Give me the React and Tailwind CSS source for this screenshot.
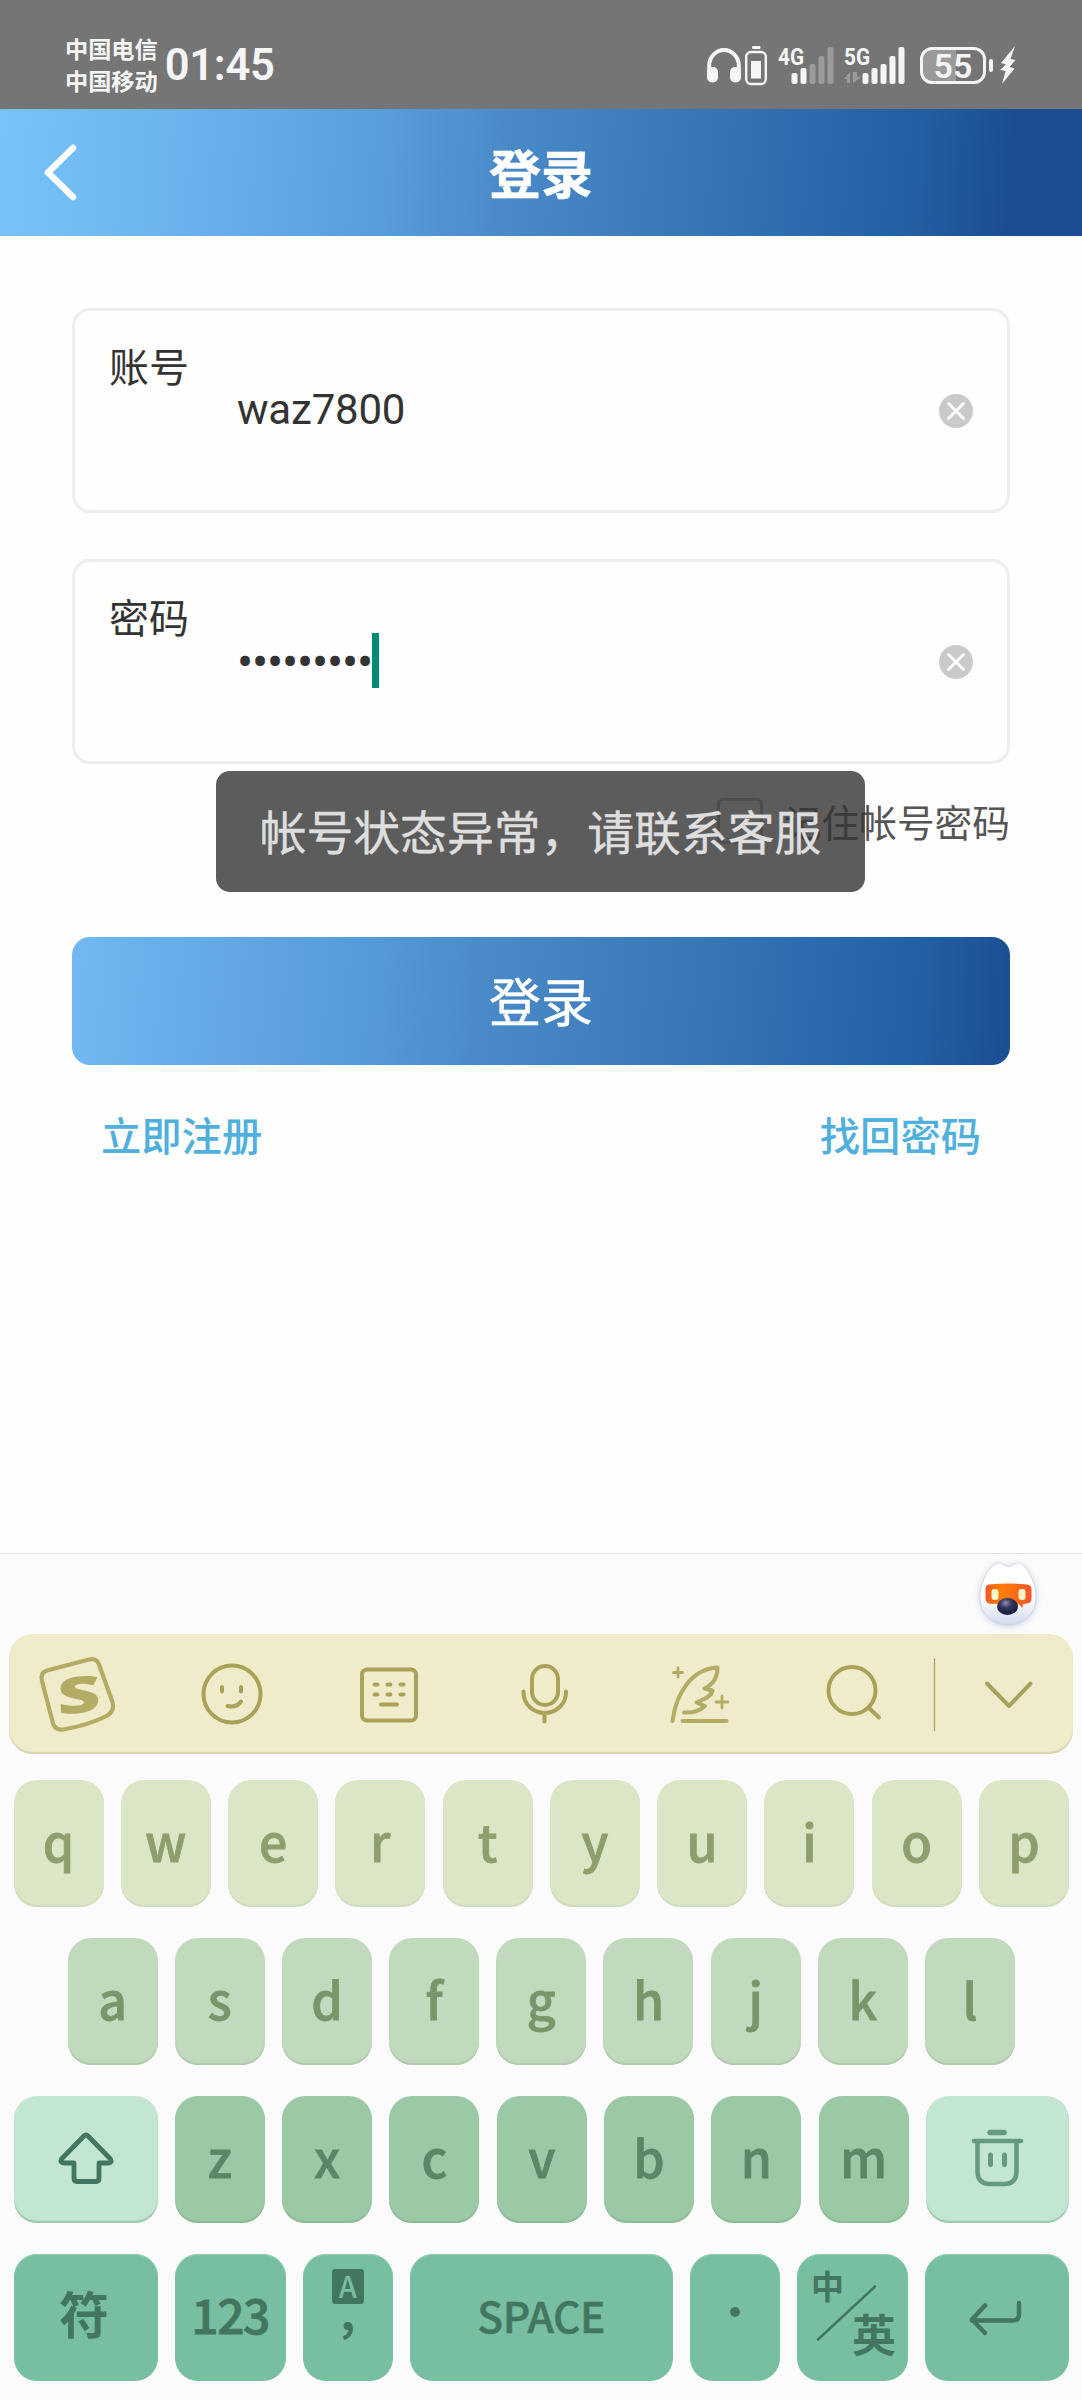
import { useState } from "react";

const topRow = ["q", "w", "e", "r", "t", "y", "u", "i", "o", "p"];
const middleRow = ["a", "s", "d", "f", "g", "h", "j", "k", "l"];
const bottomRow = ["z", "x", "c", "v", "b", "n", "m"];

const keyBase =
  "h-[127px] rounded-[23px] flex items-center justify-center shrink-0 text-[50px] leading-none";
const letter = "w-[90px] pb-[7px] font-medium [-webkit-text-stroke:0.800px_currentColor]";
const fnKey = "bg-[#77bfa0] text-[#437660] shadow-[inset_0_1px_1px_#8fd0b2]";

function Signal({ label, bars, data }) {
  const heights = [11, 16, 20, 28, 37];
  return (
    <svg className="overflow-visible" width="62" height="40" viewBox="0 0 62 40" fill="#f5f5f5">
      <text x="0" y="19" fontSize="24" fontWeight="700" textLength="26" lengthAdjust="spacingAndGlyphs">
        {label}
      </text>
      {data && (
        <g fill="#9b9b9b">
          <path d="M0 33l6-7v11H3v-4zM9 26v11l8-6h-4v-5z" />
        </g>
      )}
      {heights.map((h, i) => (
        <rect
          key={h}
          x={(data ? 18.5 : 13.5) + i * 9}
          y={38 - h}
          width="6"
          height={h}
          rx="2"
          fill={i < bars ? "#f5f5f5" : "#9b9b9b"}
        />
      ))}
    </svg>
  );
}

function StatusBar() {
  return (
    <div className="h-[109px] bg-[#757575] text-[#f5f5f5] flex pl-[65px] pr-[66px]">
      <div className="text-[23.200px] leading-[32px] font-bold pt-[31.500px]">
        <div>中国电信</div>
        <div>中国移动</div>
      </div>
      <div className="text-[43.500px] leading-[50px] font-semibold font-[Roboto] tracking-[-0.300px] ml-[7px] pt-[41px]">01:45</div>

      <div className="ml-auto flex pt-[46px] font-[Roboto]">
        <svg width="34" height="40" viewBox="0 0 34 40" fill="none">
          <path d="M2.2 30V19.500a14.800 15.500 0 0 1 29.600 0V30" stroke="#f5f5f5" strokeWidth="4" />
          <rect x="0" y="21" width="11" height="15.500" rx="5" fill="#f5f5f5" />
          <rect x="23" y="21" width="11" height="15.500" rx="5" fill="#f5f5f5" />
        </svg>
        <svg className="ml-[4px]" width="22" height="40" viewBox="0 0 22 40" fill="none">
          <rect x="7" y="0" width="8.500" height="3" rx="1" fill="#f5f5f5" />
          <rect x="1.200" y="6" width="19.600" height="32" rx="5" stroke="#f5f5f5" strokeWidth="2.400" />
          <rect x="6" y="15" width="10" height="17.500" fill="#f5f5f5" />
        </svg>
        <div className="ml-[11px]">
          <Signal label="4G" bars={2} />
        </div>
        <div className="ml-[4px]">
          <Signal label="5G" bars={5} data />
        </div>
        <div className="ml-[14px] mt-px w-[66px] h-[37px] rounded-[12px] border-[3px] border-[#f5f5f5] bg-linear-to-r from-[#9a9a9a] from-55% to-[#757575] to-55% flex items-center justify-center text-[34px] leading-none font-semibold">
          55
        </div>
        <div className="ml-[3px] mt-[13px] w-[4px] h-[13px] rounded-[2px] bg-[#f5f5f5]" />
        <svg className="ml-[7px]" width="16" height="40" viewBox="0 0 16 40" fill="#f5f5f5">
          <path d="M15 0L1 17l5 1.500L0 24l5.500 1L2 38 14.500 22.500l-5-1.500L15.500 14l-5-1z" />
        </svg>
      </div>
    </div>
  );
}

function Header() {
  return (
    <div className="h-[127px] bg-[linear-gradient(94deg,#79c3fb_0%,#6db7f0_13%,#64aae7_24%,#5a9fdd_34%,#4b8bca_46%,#4181c0_55%,#3775b5_65%,#2f6caf_73%,#2360a3_84%,#1c4d92_93%,#1c4d92_100%)] grid grid-cols-3 items-center text-white">
      <svg className="ml-[42px]" width="36" height="60" viewBox="0 0 36 60" fill="none">
        <path d="M31 5L6 29.500 31 54" stroke="#fff" strokeWidth="6.500" strokeLinecap="round" strokeLinejoin="round" />
      </svg>
      <div className="text-center text-[52px] leading-none font-bold pb-[2px] [-webkit-text-stroke:0.600px_white]">登录</div>
    </div>
  );
}

function Field({ label, onClear, children }) {
  return (
    <div className="h-[205px] rounded-[18px] border-[3px] border-[#eee] flex items-center pl-[34px] pr-[34px] text-[#333]">
      <div className="self-start mt-[34px] text-[40px] leading-[40px]">{label}</div>
      <div className="ml-[48px] mb-[2px] flex items-center text-[42px] leading-[56px] font-[Roboto] tracking-[-0.200px]">{children}</div>
      <button className="ml-auto" onClick={onClear}>
        <svg width="34" height="34" viewBox="0 0 34 34" fill="none">
          <circle cx="17" cy="17" r="17" fill="#cacaca" />
          <path d="M9.500 9.500l15 15M24.500 9.500L9.500 24.500" stroke="#fff" strokeWidth="2.800" strokeLinecap="round" />
        </svg>
      </button>
    </div>
  );
}

function Mascot() {
  return (
    <svg width="72" height="76" viewBox="-8 -5 72 76" fill="none">
      <defs>
        <linearGradient id="face" x1="0" y1="0" x2="0" y2="1">
          <stop offset=".55" stopColor="#fff" />
          <stop offset="1" stopColor="#d3d9ea" />
        </linearGradient>
        <radialGradient id="nose" cx=".42" cy=".3" r=".7">
          <stop offset="0" stopColor="#8d90b4" />
          <stop offset=".4" stopColor="#34365c" />
          <stop offset="1" stopColor="#15183a" />
        </radialGradient>
        <linearGradient id="visor" x1="0" y1="0" x2="1" y2="0">
          <stop offset="0" stopColor="#ee5a22" />
          <stop offset=".35" stopColor="#ff7d08" />
          <stop offset="1" stopColor="#f5572a" />
        </linearGradient>
      </defs>
      <g className="drop-shadow-[0_1px_3px_rgba(120,140,200,0.35)]">
        <path
          d="M18 1C22 .5 24 4.500 28.500 4.500S35 .5 39 1C47 3 56 21 56 35 56 52 44 63 28 63S0 52 0 35C0 21 9 3 18 1z"
          fill="url(#face)"
          stroke="#ccd1e0"
          strokeWidth=".8"
        />
      </g>
      <path d="M9 22.500q19.500-2 38 0 4.500.5 4.500 4.500v10q0 4-4.500 4.500l-4 .5-.5 4-4-4-28-.3q-5-.5-5-4.700V27q0-4 3.500-4.500z" fill="url(#visor)" />
      <rect x="11.500" y="27" width="7" height="11" rx="3" fill="#fff5c8" />
      <rect x="38.500" y="27" width="7" height="11" rx="3" fill="#fff5c8" />
      <ellipse cx="27.500" cy="44.500" rx="10.500" ry="8.500" fill="url(#nose)" />
    </svg>
  );
}

function Toolbar() {
  return (
    <div className="mx-[9px] h-[120px] rounded-[24px] bg-[#f0ebcb] shadow-[inset_0_-2px_1px_#d8d2ad] flex items-center">
      <svg width="1064" height="120" viewBox="9 1634 1064 120" fill="none" stroke="#aaa259" strokeWidth="4" strokeLinecap="round" strokeLinejoin="round">
        {/* input method logo */}
        <g stroke="#b4ac65">
          <path
            d="M47 1670.500L89 1659.500Q96.500 1657.500 99 1664.500L112.500 1702Q115 1710.500 107.500 1715.500 88 1725.500 63 1729.500 55.500 1730.500 53 1723.500L42 1681Q40 1672.500 47 1670.500z"
            strokeWidth="4.200"
          />
          <text
            x="-14.500"
            y="18.500"
            transform="translate(78 1695) rotate(-5) skewX(-3) scale(1.450 .97)"
            fontSize="52"
            fontWeight="800"
            fontFamily="Open Sans"
            fill="#b4ac65"
            stroke="none"
          >
            S
          </text>
        </g>

        <circle cx="232" cy="1694" r="28.500" />
        <path d="M222 1687v4.500M241 1687v4.500" />
        <path d="M227.500 1706q9 2 13.500-4.500" />

        <rect x="362" y="1669.500" width="54" height="51" rx="5" />
        <path d="M374.500 1684.500h3M387.500 1684.500h3M400.500 1684.500h3M374.500 1694.500h3M387.500 1694.500h3M400.500 1694.500h3M381 1704.500h16" />

        <rect x="532" y="1666" width="26" height="39" rx="13" />
        <path d="M523.500 1691.500v1a21.200 20.500 0 0 0 42.500 0v-1M544.500 1713.500v8" />

        <g stroke="#b4ac65">
          <path d="M672.500 1721C676 1694 691 1669 717.500 1667.500 717.500 1678 712 1685 704.500 1688.500L712.500 1690.500C711.500 1697 703 1699.500 696.500 1702.500L705 1706C699 1711.500 692 1713 684 1712.500" />
          <path d="M682.500 1721h44" />
          <path d="M678 1668v9M673.500 1672.500h9M722 1696v12M716 1702h12" strokeWidth="2.800" />
        </g>

        <circle cx="852" cy="1690.500" r="23.500" />
        <path d="M869 1708l10 9.500" />
        <path d="M934.500 1659v71.500" strokeWidth="1.300" />
        <path d="M987 1683.500l22 22.500 21.500-22.500" />
      </svg>
    </div>
  );
}

function Keyboard() {
  return (
    <div className="h-[847px] bg-[#fbfbfb] border-t border-[#e6e6e2]">
      <div className="h-[80px] flex justify-end pr-[38px] pt-[3px]">
        <Mascot />
      </div>
      <Toolbar />

      <div className="mt-[26px] ml-[13.500px] mr-[13px] flex flex-col gap-[31px]">
        <div className="flex justify-between">
          {topRow.map((k) => (
            <div key={k} className={`${keyBase} ${letter} bg-[#dbe6c7] text-[#8f9e6d] shadow-[inset_0_-2px_1px_#d1dcbd]`}>
              {k}
            </div>
          ))}
        </div>

        <div className="flex justify-between mx-[54px]">
          {middleRow.map((k) => (
            <div key={k} className={`${keyBase} ${letter} bg-[#c1dabd] text-[#7a956a] shadow-[inset_0_-2px_1px_#b1caad]`}>
              {k}
            </div>
          ))}
        </div>

        <div className="flex justify-between">
          <div className={`${keyBase} w-[144px] bg-[#c2e6d1] shadow-[inset_0_-2px_1px_#9cc6ae]`}>
            <svg className="mb-[3px]" width="58" height="56" viewBox="0 0 58 56" fill="none" stroke="#437660" strokeWidth="4.800" strokeLinejoin="round">
              <path d="M29 5Q30 5 31 6L53.500 29Q55.500 33 51.500 33H42V48Q42 51.500 39 51.500H20Q17 51.500 17 48V33H7Q2.500 33 4.500 29L27 6Q28 5 29 5z" />
            </svg>
          </div>
          {bottomRow.map((k) => (
            <div key={k} className={`${keyBase} ${letter} bg-[#9bc9a6] text-[#5b8766] shadow-[inset_0_-2px_1px_#8cba97]`}>
              {k}
            </div>
          ))}
          <div className={`${keyBase} w-[143px] bg-[#c2e6d1] shadow-[inset_0_-2px_1px_#9cc6ae]`}>
            <svg className="mb-[3px]" width="54" height="58" viewBox="0 0 54 58" fill="none" stroke="#659a7f" strokeWidth="4.500" strokeLinecap="round">
              <path d="M19 3.500h14" strokeWidth="5.500" />
              <path d="M3 12h47" />
              <path d="M6.500 13v29q0 13 12 13h15q12 0 12-13V13" />
              <path d="M19.500 26v9.500M33.500 26v9.500" strokeWidth="5" />
            </svg>
          </div>
        </div>

        <div className="flex justify-between font-medium">
          <div className={`${keyBase} ${fnKey} w-[144px] pb-[11px] pr-[3px] text-[48px] font-bold`}>符</div>
          <div className={`${keyBase} ${fnKey} w-[111px] pb-[9px]`}>
            <span className="text-[48px] tracking-[-1.500px] [-webkit-text-stroke:0.800px_currentColor]">123</span>
          </div>
          <div className={`${keyBase} ${fnKey} w-[90px] flex-col justify-start pt-[15px]`}>
            <span className="w-[32px] h-[35px] rounded-[3px] bg-[#437660] text-[#77bfa0] text-[29px] leading-[32px] text-center">A</span>
            <span className="text-[46px] leading-[12px] font-bold">,</span>
          </div>
          <div className={`${keyBase} ${fnKey} w-[263px] pb-[4px]`}>
            <span className="text-[42.500px] tracking-[-0.400px] [-webkit-text-stroke:0.500px_currentColor]">SPACE</span>
          </div>
          <div className={`${keyBase} ${fnKey} w-[90px] pb-[12px]`}>
            <span className="w-[10px] h-[10px] rounded-full bg-[#437660]" />
          </div>
          <div className={`${keyBase} ${fnKey} w-[111px] relative font-bold`}>
            <span className="absolute left-[14px] top-[15px] text-[33px]">中</span>
            <svg className="absolute left-[19px] top-[30px]" width="62" height="58" viewBox="0 0 62 58">
              <path d="M2 55.500L59 2.500" stroke="#437660" strokeWidth="2.500" strokeLinecap="round" />
            </svg>
            <span className="absolute left-[55px] top-[57px] text-[44px]">英</span>
          </div>
          <div className={`${keyBase} ${fnKey} w-[144px]`}>
            <svg className="overflow-visible mr-[3px] mt-[2px]" width="54" height="34" viewBox="0 0 54 34" fill="none" stroke="#437660" strokeWidth="4.500" strokeLinecap="round" strokeLinejoin="round">
              <path d="M17 3.500L4 17.500 17 31M4 18.500h41q6 0 6-6V1" />
            </svg>
          </div>
        </div>
      </div>
    </div>
  );
}

export default function App() {
  const [account, setAccount] = useState("waz7800");
  const [password, setPassword] = useState("•••••••••");

  return (
    <div className="w-[1082px] h-[2400px] overflow-hidden bg-[#fefefe] font-['Noto_Sans_CJK_SC',sans-serif]">
      <StatusBar />
      <Header />

      <div className="relative h-[1317px] px-[72px] pt-[72px]">
        <div className="flex flex-col gap-[46px]">
          <Field label="账号" onClear={() => setAccount("")}>
            {account}
          </Field>
          <Field label="密码" onClear={() => setPassword("")}>
            <span className="mt-[4px] text-[48px] leading-[48px] tracking-[-1.200px]">{password}</span>
            <span className="w-[7px] h-[55px] bg-[#008b75]" />
          </Field>
        </div>

        <div className="h-[117px] pb-[4px] flex items-center justify-end text-[37.700px] leading-none text-[#555]">
          <span className="w-[46px] h-[46px] rounded-[6px] border-[3px] border-[#b0b0b0] mr-[21px]" />
          记住帐号密码
        </div>

        <button className="mt-[56px] w-full h-[128px] pb-[3px] rounded-[18px] text-white text-[52px] leading-none [-webkit-text-stroke:0.500px_white] bg-[linear-gradient(94deg,#72b9f3_0%,#68aeea_10%,#60a5e2_20%,#569bd9_31%,#4b8bca_43%,#4181c0_55%,#3775b5_68%,#2f6caf_77%,#2360a3_90%,#1c4d92_100%)]">
          登录
        </button>

        <div className="h-[142px] px-[29px] pb-[4px] flex items-center justify-between text-[40.300px] leading-none font-medium text-[#4fb0dd]">
          <a>立即注册</a>
          <a>找回密码</a>
        </div>

        {/* toast */}
        <div className="absolute left-[216px] top-[535px] w-[649px] h-[121px] pb-[3px] rounded-[14px] bg-[#333]/80 flex items-center justify-center text-[46.800px] leading-none text-[#dedede] [-webkit-text-stroke:0.400px_#dedede] whitespace-nowrap">
          帐号状态异常，请联系客服
        </div>
      </div>

      <Keyboard />
    </div>
  );
}
